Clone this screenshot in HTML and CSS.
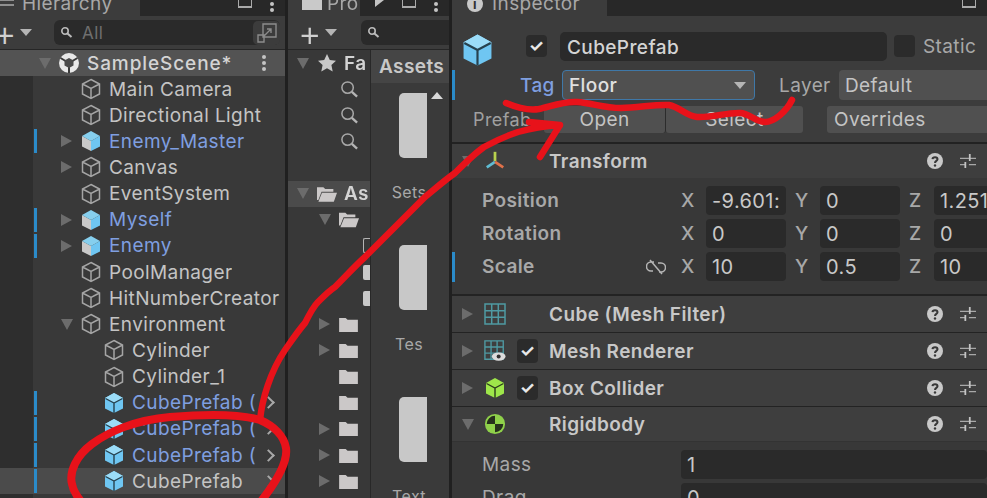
FILE: index.html
```html
<!doctype html>
<html>
<head>
    <meta charset="UTF-8">
    <title>Unity Editor</title>
    <link rel="stylesheet" href="styles.css">
</head>
<body>
    <svg class="defs" width="0" height="0">
        <symbol id="cube" viewBox="0 0 20 22"><path d="M10 1.500 18.500 6v10L10 20.500 1.500 16V6ZM1.500 6 10 10.500 18.500 6M10 10.500v10" fill="none" stroke="#a5a5a5" stroke-width="1.500"/></symbol>
        <symbol id="prefab" viewBox="0 0 20 22"><path d="M10 1 19 6v10.500L10 21 1 16.500V6Z" fill="#6fc6f2"/><path d="M10 1 19 6l-9 4.800L1 6Z" fill="#9bdcf8"/><path d="M1.500 6.500 10 11l8.500-4.500M10 11v10" fill="none" stroke="#27424f" stroke-width="1.400"/></symbol>
        <symbol id="model" viewBox="0 0 20 22"><path d="M10 11 19 6v10.500L10 21Z" fill="#6fc6f2"/><path d="M10 11 1 6v10.500L10 21Z" fill="#c9c9c9"/><path d="M10 1 19 6l-9 5L1 6Z" fill="#86cfee"/></symbol>
        <symbol id="folder" viewBox="0 0 20 16"><path d="M0 1h7l2 2h11v13H0Z" fill="#cbc8c8"/></symbol>
        <symbol id="folder-open" viewBox="0 0 22 17"><path d="M0 1h7l2 2h9v3H5L1.500 15H0Z" fill="#cbc8c8"/><path d="M5.500 7H22l-3.500 10H1.500Z" fill="#cbc8c8"/></symbol>
        <symbol id="lens" viewBox="0 0 20 20"><circle cx="8" cy="8" r="6" fill="none" stroke="#a8a8a8" stroke-width="1.600"/><path d="m12.500 12.500 5.500 5" stroke="#b5b5b5" stroke-width="2.400"/></symbol>
        <symbol id="help" viewBox="0 0 16 16"><circle cx="8" cy="8" r="8" fill="#c9c9c9"/><path d="M5.500 6.200C5.700 3.700 10.500 3.700 10.500 6.300 10.500 8 8 7.900 8 10" fill="none" stroke="#383838" stroke-width="2"/><circle cx="8" cy="12.500" r="1.200" fill="#383838"/></symbol>
        <symbol id="preset" viewBox="0 0 18 18"><path d="M0 6h18M0 13h6M10 13h8" stroke="#a8a8a8" stroke-width="1.500"/><path d="M11 1v8M6 10v7" stroke="#c4c4c4" stroke-width="2"/></symbol>
        <symbol id="grid" viewBox="0 0 22 22"><path d="M1 1h20v20H1ZM7.700 1v20M14.300 1v20M1 7.700h20M1 14.300h20" fill="none" stroke="#4f9aa3" stroke-width="1.500"/></symbol>
    </svg>

    <div class="editor">
        <section class="panel hierarchy">
            <div class="tabbar">
                <div class="tab tab-h">
                    <svg class="tab-icon" viewBox="0 0 14 10" width="14" height="10"><path d="M0 2h14M0 7h14" stroke="#aaa" stroke-width="1.500"/></svg>
                    <span>Hierarchy</span>
                </div>
                <div class="tab-tools">
                    <span class="win-icon"></span>
                    <span class="dots-v small"></span>
                </div>
            </div>
            <div class="toolbar">
                <span class="plus plus-h">+</span><span class="drop"></span>
                <div class="search">
                    <svg viewBox="0 0 14 14" width="14" height="14"><circle cx="5" cy="5" r="3.200" fill="none" stroke="#bbb" stroke-width="1.600"/><path d="m7.500 7.500 4 3.500" stroke="#bbb" stroke-width="2"/></svg>
                    <span>All</span>
                    <div class="search-btn">
                        <svg viewBox="0 0 22 22" width="22" height="22"><path d="M7 2h13v13H7ZM2 13h6v7H2ZM8 14l7-7M11 7h4v4" fill="none" stroke="#8c8c8c" stroke-width="1.400"/></svg>
                    </div>
                </div>
            </div>
            <div class="tree">
                <div class="scene-row">
                    <span class="arrow down"></span>
                    <svg class="ico" viewBox="0 0 20 20"><circle cx="10" cy="10" r="10" fill="#e8e8e8"/><path d="M10 10V20M10 10 1.500 5M10 10l8.500-5" stroke="#3a3a3a" stroke-width="2"/><path d="M10 5l4.500 2.500v5L10 15l-4.500-2.500v-5Z" fill="#4a4a4a"/></svg>
                    <span class="name">SampleScene*</span>
                    <span class="dots-v"></span>
                </div>
                <div class="row lv1"><span class="arrow none"></span><svg class="ico"><use href="#cube"/></svg><span class="name">Main Camera</span></div>
                <div class="row lv1"><span class="arrow none"></span><svg class="ico"><use href="#cube"/></svg><span class="name">Directional Light</span></div>
                <div class="row lv1 over"><span class="arrow right"></span><svg class="ico"><use href="#model"/></svg><span class="name blue">Enemy_Master</span></div>
                <div class="row lv1"><span class="arrow right"></span><svg class="ico"><use href="#cube"/></svg><span class="name">Canvas</span></div>
                <div class="row lv1"><span class="arrow none"></span><svg class="ico"><use href="#cube"/></svg><span class="name">EventSystem</span></div>
                <div class="row lv1 over"><span class="arrow right"></span><svg class="ico"><use href="#model"/></svg><span class="name blue">Myself</span></div>
                <div class="row lv1 over"><span class="arrow right"></span><svg class="ico"><use href="#model"/></svg><span class="name blue">Enemy</span></div>
                <div class="row lv1"><span class="arrow none"></span><svg class="ico"><use href="#cube"/></svg><span class="name">PoolManager</span></div>
                <div class="row lv1"><span class="arrow none"></span><svg class="ico"><use href="#cube"/></svg><span class="name">HitNumberCreator</span></div>
                <div class="row lv1"><span class="arrow down"></span><svg class="ico"><use href="#cube"/></svg><span class="name">Environment</span></div>
                <div class="row lv2"><span class="arrow none"></span><svg class="ico"><use href="#cube"/></svg><span class="name">Cylinder</span></div>
                <div class="row lv2"><span class="arrow none"></span><svg class="ico"><use href="#cube"/></svg><span class="name">Cylinder_1</span></div>
                <div class="row lv2 over"><span class="arrow none"></span><svg class="ico"><use href="#prefab"/></svg><span class="name blue">CubePrefab (</span><span class="chev"></span></div>
                <div class="row lv2 over"><span class="arrow none"></span><svg class="ico"><use href="#prefab"/></svg><span class="name blue">CubePrefab (</span><span class="chev"></span></div>
                <div class="row lv2 over"><span class="arrow none"></span><svg class="ico"><use href="#prefab"/></svg><span class="name blue">CubePrefab (</span><span class="chev"></span></div>
                <div class="row lv2 over picked"><span class="arrow none"></span><svg class="ico"><use href="#prefab"/></svg><span class="name">CubePrefab</span><span class="chev"></span></div>
            </div>
        </section>

        <section class="panel project">
            <div class="tabbar">
                <div class="tab tab-p">
                    <span class="tab-folder"></span>
                    <span>Pro</span>
                </div>
                <div class="tab-tools">
                    <span class="tab-play"></span>
                    <span class="win-icon"></span>
                    <span class="dots-v small"></span>
                </div>
            </div>
            <div class="toolbar">
                <span class="plus plus-p">+</span><span class="drop"></span>
                <div class="search search-p">
                    <svg viewBox="0 0 14 14" width="14" height="14"><circle cx="5" cy="5" r="3.200" fill="none" stroke="#bbb" stroke-width="1.600"/><path d="m7.500 7.500 4 3.500" stroke="#bbb" stroke-width="2"/></svg>
                </div>
            </div>
            <div class="browser">
                <div class="folders">
                    <div class="ftree head"><span class="arrow down"></span><svg class="ico star" viewBox="0 0 20 20"><path d="m10 1 2.800 6 6.200.7-4.600 4.300 1.300 6.500L10 15.200 4.300 18.500 5.600 12 1 7.700 7.200 7Z" fill="#c9c9c9"/></svg><b>Fa</b></div>
                    <div class="ftree sub"><svg class="ico"><use href="#lens"/></svg></div>
                    <div class="ftree sub"><svg class="ico"><use href="#lens"/></svg></div>
                    <div class="ftree sub"><svg class="ico"><use href="#lens"/></svg></div>
                    <div class="ftree empty"></div>
                    <div class="ftree head on"><span class="arrow down"></span><svg class="ico"><use href="#folder-open"/></svg><b>As</b></div>
                    <div class="ftree lv-f"><span class="arrow down"></span><svg class="ico"><use href="#folder-open"/></svg></div>
                    <div class="ftree lv-d"><span class="doc line"></span></div>
                    <div class="ftree lv-d"><span class="doc"></span></div>
                    <div class="ftree lv-d"><span class="doc"></span></div>
                    <div class="ftree lv-f"><span class="arrow right"></span><svg class="ico fold"><use href="#folder"/></svg></div>
                    <div class="ftree lv-f"><span class="arrow right"></span><svg class="ico fold"><use href="#folder"/></svg></div>
                    <div class="ftree lv-f"><span class="arrow none"></span><svg class="ico fold"><use href="#folder"/></svg></div>
                    <div class="ftree lv-f"><span class="arrow none"></span><svg class="ico fold"><use href="#folder"/></svg></div>
                    <div class="ftree lv-f"><span class="arrow right"></span><svg class="ico fold"><use href="#folder"/></svg></div>
                    <div class="ftree lv-f"><span class="arrow right"></span><svg class="ico fold"><use href="#folder"/></svg></div>
                    <div class="ftree lv-f"><span class="arrow right"></span><svg class="ico fold"><use href="#folder"/></svg></div>
                </div>
                <div class="files">
                    <div class="crumb">Assets</div>
                    <div class="file-area">
                        <div class="file-list">
                            <div class="thumb"></div><div class="file-name">Sets</div>
                            <div class="thumb"></div><div class="file-name">Tes</div>
                            <div class="thumb"></div><div class="file-name">Text</div>
                        </div>
                        <span class="scroll-up"></span>
                    </div>
                </div>
            </div>
        </section>

        <section class="panel inspector">
            <div class="tabbar">
                <div class="tab tab-i">
                    <span class="info">i</span>
                    <span>Inspector</span>
                </div>
                <div class="tab-tools">
                    <span class="win-icon"></span>
                </div>
            </div>
            <div class="obj-head">
                <div class="obj-line">
                    <svg class="big-cube"><use href="#prefab"/></svg>
                    <span class="check on">✓</span>
                    <div class="obj-name">CubePrefab</div>
                    <span class="check"></span>
                    <span class="static">Static</span>
                </div>
                <div class="tag-line">
                    <span class="tag-label">Tag</span>
                    <div class="select focus">Floor<span class="drop"></span></div>
                    <span class="layer-label">Layer</span>
                    <div class="select layer">Default</div>
                </div>
                <div class="prefab-line">
                    <span class="prefab-label">Prefab</span>
                    <div class="btn open">Open</div>
                    <div class="btn select-btn">Select</div>
                    <div class="btn overrides">Overrides</div>
                </div>
            </div>

            <div class="comp tall">
                <span class="arrow down"></span>
                <svg class="comp-ico" viewBox="0 0 24 24"><path d="M12 12V2" stroke="#b8d24e" stroke-width="3"/><path d="M12 13 3 19" stroke="#5fbcd3" stroke-width="3"/><path d="m12 13 9 6" stroke="#e0714a" stroke-width="3"/></svg>
                <span class="comp-check none"></span>
                <span class="comp-name">Transform</span>
                <svg class="help"><use href="#help"/></svg><svg class="preset"><use href="#preset"/></svg>
            </div>
            <div class="vectors">
                <div class="vec">
                    <span class="vec-label">Position</span>
                    <span class="axis">X</span><span class="field">-9.601:</span>
                    <span class="axis">Y</span><span class="field">0</span>
                    <span class="axis">Z</span><span class="field">1.251</span>
                </div>
                <div class="vec">
                    <span class="vec-label">Rotation</span>
                    <span class="axis">X</span><span class="field">0</span>
                    <span class="axis">Y</span><span class="field">0</span>
                    <span class="axis">Z</span><span class="field">0</span>
                </div>
                <div class="vec over-i">
                    <span class="vec-label">Scale
                        <svg class="link" viewBox="0 0 20 16"><path d="M8 3H5a4.500 4.500 0 0 0 0 9h2M12 4h3a4.500 4.500 0 0 1 0 9h-2M4 1l12 14" fill="none" stroke="#b5b5b5" stroke-width="1.500"/></svg>
                    </span>
                    <span class="axis">X</span><span class="field">10</span>
                    <span class="axis">Y</span><span class="field">0.5</span>
                    <span class="axis">Z</span><span class="field">10</span>
                </div>
            </div>

            <div class="comp">
                <span class="arrow right"></span>
                <svg class="comp-ico"><use href="#grid"/></svg>
                <span class="comp-check none"></span>
                <span class="comp-name">Cube (Mesh Filter)</span>
                <svg class="help"><use href="#help"/></svg><svg class="preset"><use href="#preset"/></svg>
            </div>
            <div class="comp">
                <span class="arrow right"></span>
                <svg class="comp-ico" viewBox="0 0 24 24"><path d="M1 1h20v20H1ZM7.700 1v20M14.300 1v20M1 7.700h20M1 14.300h20" fill="none" stroke="#4f9aa3" stroke-width="1.500"/><ellipse cx="16" cy="18" rx="7.500" ry="4.500" fill="#ddd"/><circle cx="16" cy="18" r="2.200" fill="#333"/></svg>
                <span class="comp-check on">✓</span>
                <span class="comp-name">Mesh Renderer</span>
                <svg class="help"><use href="#help"/></svg><svg class="preset"><use href="#preset"/></svg>
            </div>
            <div class="comp">
                <span class="arrow right"></span>
                <svg class="comp-ico" viewBox="0 0 20 22"><path d="M10 1 19 6v10.500L10 21 1 16.500V6Z" fill="#9ee64a"/><path d="M1.500 6.500 10 11l8.500-4.500M10 11v10" fill="none" stroke="#2c3a1c" stroke-width="1.400"/></svg>
                <span class="comp-check on">✓</span>
                <span class="comp-name">Box Collider</span>
                <svg class="help"><use href="#help"/></svg><svg class="preset"><use href="#preset"/></svg>
            </div>
            <div class="comp short">
                <span class="arrow down"></span>
                <svg class="comp-ico" viewBox="0 0 24 24"><circle cx="12" cy="12" r="11" fill="#8fd14a"/><path d="M12 12V3a9 9 0 0 0-9 9ZM12 12v9a9 9 0 0 0 9-9Z" fill="#26301c"/></svg>
                <span class="comp-check none"></span>
                <span class="comp-name">Rigidbody</span>
                <svg class="help"><use href="#help"/></svg><svg class="preset"><use href="#preset"/></svg>
            </div>
            <div class="props">
                <div class="prop"><span class="prop-label">Mass</span><span class="field wide">1</span></div>
                <div class="prop"><span class="prop-label">Drag</span><span class="field wide">0</span></div>
            </div>
        </section>
    </div>

    <!-- red marker scribbled over the screenshot -->
    <svg class="scribble" viewBox="0 0 987 498" width="987" height="498">
        <path d="M506 103C518 108 528 111 539 109 552 106 564 101 577 102 592 103 604 108 621 108 638 108 655 104 669 105 680 107 686 116 697 117 712 118 728 112 741 113 750 114 756 122 765 122 774 122 786 112 792 100"/>
        <path class="ring" d="M260 420C240 414 205 414 170 417 135 420 108 432 92 444 76 456 69 472 72 484 73 490 76 495 80 500M260 420C274 426 284 436 286 448 288 462 276 482 262 500"/>
        <path d="M260 420C262 400 270 372 285 350 292 340 298 331 305 323 310 313 314 306 318 302 326 294 330 290 335 287 346 276 355 266 365 257 376 246 385 237 395 227 406 216 415 207 425 197 436 188 445 180 455 173 464 164 474 154 484 147 495 141 506 136 518 132 532 128 546 126 560 125M529 122 560 125 540 157"/>
    </svg>
</body>
</html>
```
FILE: styles.css
```css
html, body {
    margin: 0;
    height: 100%;
    background-color: #202020;
    overflow: hidden;
}
body {
    font-family: Inter, "Liberation Sans", sans-serif;
    font-size: 19px;
    letter-spacing: 0.4px;
    color: #c4c4c4;
}
.defs {
    display: none;
}
.editor {
    display: flex;
    gap: 3px;
    width: 987px;
    height: 498px;
    overflow: hidden;
    filter: blur(0.4px);
}
.panel {
    flex: none;
    height: 498px;
    overflow: hidden;
    background-color: #383838;
}
.hierarchy { width: 285px; }
.project { width: 161px; }
.inspector { width: 535px; }

/* tab strip, its top is cut by the screenshot */
.tabbar {
    display: flex;
    height: 16px;
    background-color: #282828;
    overflow: hidden;
}
.tab {
    flex: none;
    display: flex;
    align-items: flex-end;
    gap: 8px;
    height: 16px;
    box-sizing: border-box;
    background-color: #3c3c3c;
    color: #a8a8a8;
    line-height: 24px;
}
.tab-h { width: 140px; }
.tab-p { width: 72px; gap: 5px; padding-left: 14px; }
.tab-i { width: 155px; gap: 9px; padding-left: 15px; }
.tab-icon { margin-bottom: 8px; }
.tab-folder {
    flex: none;
    width: 20px;
    height: 10px;
    margin-bottom: 6px;
    background-color: #c9c9c9;
}
.tab .info {
    flex: none;
    width: 16px;
    height: 16px;
    margin-bottom: 4px;
    border-radius: 50%;
    background-color: #c9c9c9;
    color: #333;
    font-size: 13px;
    font-weight: 700;
    line-height: 16px;
    text-align: center;
}
.tab-tools {
    flex: 1;
    display: flex;
    justify-content: flex-end;
    align-items: flex-start;
    gap: 18px;
    padding-right: 11px;
}
.tab-play {
    width: 0;
    height: 0;
    border-left: 9px solid #c4c4c4;
    border-bottom: 7px solid transparent;
}
.win-icon {
    width: 12px;
    height: 7px;
    border: 1.500px solid #aaa;
    border-top: 0;
    box-shadow: inset 0 -1px #aaa;
}
.dots-v {
    width: 4px;
    height: 4px;
    border-radius: 50%;
    background-color: #c4c4c4;
    box-shadow: 0 -6px #c4c4c4, 0 6px #c4c4c4;
}
.dots-v.small {
    box-shadow: 0 6px #c4c4c4;
    margin-top: 2px;
}

.toolbar {
    display: flex;
    align-items: center;
    height: 33px;
    border-bottom: 1px solid #262626;
    background-color: #3c3c3c;
}
.plus {
    flex: none;
    width: 20px;
    font-size: 36px;
    font-weight: 300;
    line-height: 30px;
    text-align: center;
    color: #d0d0d0;
}
.plus-h { margin-left: -7px; }
.plus-p { margin-left: 10px; }
.drop {
    flex: none;
    width: 0;
    height: 0;
    margin-left: 7px;
    border-left: 6px solid transparent;
    border-right: 6px solid transparent;
    border-top: 7px solid #b5b5b5;
}
.search {
    flex: none;
    display: flex;
    align-items: center;
    gap: 8px;
    width: 226px;
    height: 25px;
    margin-left: 22px;
    padding-left: 6px;
    box-sizing: border-box;
    border-radius: 6px;
    background-color: #2a2a2a;
    color: #6f6f6f;
    font-size: 17px;
}
.search-btn {
    display: flex;
    align-items: center;
    justify-content: center;
    width: 27px;
    height: 24px;
    margin-left: auto;
    border-radius: 5px;
    background-color: #3c3c3c;
}
.search-p {
    width: 95px;
    margin-left: 24px;
    border-radius: 6px 0 0 6px;
}

/* hierarchy tree */
.tree {
    height: 448px;
    background: linear-gradient(#2e2e2e, #2e2e2e) 0 0 / 33px 100% no-repeat, #393939;
}
.row, .scene-row {
    display: flex;
    align-items: center;
    height: 26.150px;
    white-space: nowrap;
}
.scene-row {
    height: 26px;
    padding: 0 19px 0 39px;
    background-color: #535353;
    font-weight: 500;
    letter-spacing: 0.9px;
    color: #d4d4d4;
}
.scene-row .name { flex: 1; }
.lv1 { padding-left: 61px; }
.lv2 { padding-left: 84px; }
.over {
    background: linear-gradient(#2b8bc9, #2b8bc9) 34px 1px / 3px calc(100% - 2px) no-repeat;
}
.picked {
    background: linear-gradient(#2b8bc9, #2b8bc9) 34px 1px / 3px calc(100% - 2px) no-repeat, #4b4b4b;
}
.arrow {
    flex: none;
    width: 0;
    height: 0;
    margin-right: 8px;
}
.arrow.none { width: 12px; }
.arrow.right {
    border-top: 6px solid transparent;
    border-bottom: 6px solid transparent;
    border-left: 11px solid #6c6c6c;
    margin-right: 9px;
}
.arrow.down {
    border-left: 6px solid transparent;
    border-right: 6px solid transparent;
    border-top: 11px solid #6c6c6c;
}
.ico {
    flex: none;
    width: 20px;
    height: 22px;
    margin-right: 8px;
}
.blue { color: #7f9fe0; }
.chev {
    flex: none;
    width: 7px;
    height: 7px;
    margin: 0 12px 0 auto;
    border-top: 2px solid #a8a8a8;
    border-right: 2px solid #a8a8a8;
    transform: rotate(45deg);
}
.row .name { overflow: hidden; }

/* project window */
.browser {
    display: flex;
    height: 448px;
}
.folders {
    flex: none;
    width: 82px;
    overflow: hidden;
}
.ftree {
    display: flex;
    align-items: center;
    height: 26.150px;
    white-space: nowrap;
}
.ftree b {
    font-weight: 600;
    color: #d4d4d4;
}
.ftree.head { padding-left: 9px; }
.ftree.head .ico { margin-right: 7px; }
.ftree.head.on {
    background-color: #4b4b4b;
}
.ftree.sub { padding-left: 52px; }
.ftree.sub .ico { width: 19px; height: 19px; }
.ftree.empty { height: 26px; }
.lv-f { padding-left: 31px; }
.lv-f .ico { height: 17px; }
.lv-f .fold { width: 19px; height: 15px; }
.lv-d { padding-left: 75px; }
.doc {
    width: 7px;
    height: 15px;
    background-color: #c9c9c9;
    border-radius: 2px 0 0 2px;
}
.doc.line {
    background: none;
    border: 1.500px solid #b5b5b5;
    border-right: 0;
    box-sizing: border-box;
}
.files {
    flex: 1;
    min-width: 0;
    border-left: 1px solid #282828;
    background-color: #3a3a3a;
}
.crumb {
    height: 33px;
    padding-left: 8px;
    background-color: #454545;
    font-weight: 600;
    line-height: 33px;
    color: #c8c8c8;
}
.file-area {
    display: flex;
    height: 415px;
    overflow: hidden;
}
.file-list {
    flex: none;
    width: 56px;
    padding-top: 10px;
    overflow: hidden;
}
.thumb {
    width: 28px;
    height: 65px;
    margin-left: 28px;
    border-radius: 5px 0 0 5px;
    background-color: #c8c8c8;
}
.file-name {
    height: 87px;
    margin-left: 20px;
    padding-top: 24px;
    box-sizing: border-box;
    overflow: hidden;
    font-size: 16px;
    text-align: center;
    color: #a8a8a8;
}
.scroll-up {
    width: 0;
    height: 0;
    margin: 9px 0 0 4px;
    border-left: 6px solid transparent;
    border-right: 6px solid transparent;
    border-bottom: 7px solid #d8d8d8;
}

/* inspector */
.obj-head {
    height: 126px;
    border-bottom: 2px solid #222;
    background: linear-gradient(#2b8bc9, #2b8bc9) 0 54px / 3px 30px no-repeat, #3c3c3c;
}
.obj-line {
    display: flex;
    align-items: center;
    height: 48px;
    padding: 6px 0 0 10px;
}
.big-cube {
    flex: none;
    width: 31px;
    height: 36px;
    margin: 8px 33px 0 0;
}
.check {
    flex: none;
    width: 21px;
    height: 22px;
    border-radius: 4px;
    background-color: #2b2b2b;
    color: #e8e8e8;
    font-size: 17px;
    font-weight: 700;
    line-height: 22px;
    text-align: center;
}
.obj-name {
    flex: none;
    width: 327px;
    height: 29px;
    margin: 0 7px 0 13px;
    padding-left: 7px;
    box-sizing: border-box;
    border-radius: 5px;
    background-color: #2a2a2a;
    font-weight: 500;
    line-height: 31px;
    color: #d4d4d4;
}
.static {
    margin-left: 8px;
    color: #a8a8a8;
}
.tag-line {
    display: flex;
    align-items: center;
    height: 30px;
    padding-left: 68px;
}
.tag-label {
    flex: none;
    width: 42px;
    font-weight: 500;
    color: #7f9fe0;
}
.select {
    flex: none;
    display: flex;
    align-items: center;
    justify-content: space-between;
    height: 30px;
    padding: 0 8px 0 6px;
    box-sizing: border-box;
    background-color: #505050;
    border-radius: 4px;
}
.focus {
    width: 193px;
    border: 1px solid #3f78a8;
    font-weight: 500;
    color: #e0e0e0;
}
.layer-label {
    flex: none;
    margin-left: 24px;
    width: 60px;
    color: #a8a8a8;
}
.layer {
    width: 170px;
}
.prefab-line {
    display: flex;
    align-items: center;
    height: 27px;
    margin-top: 6px;
    padding-left: 21px;
}
.prefab-label {
    flex: none;
    width: 71px;
    font-size: 18px;
    color: #a0a0a0;
}
.btn {
    flex: none;
    height: 27px;
    box-sizing: border-box;
    background-color: #505050;
    border-radius: 3px;
    line-height: 27px;
    text-align: center;
}
.open { width: 122px; border-right: 1px solid #2c2c2c; }
.select-btn { width: 137px; }
.overrides {
    width: 180px;
    margin-left: 24px;
    padding-left: 7px;
    text-align: left;
}

.comp {
    display: flex;
    align-items: center;
    height: 36px;
    padding: 0 11px 0 10px;
    border-bottom: 1px solid #232323;
    background-color: #3e3e3e;
}
.comp.tall { height: 34px; border-bottom: 0; }
.comp.short { height: 34px; border-bottom-color: #333; }
.comp .arrow { margin-right: 10px; }
.comp .arrow.right { margin-right: 11px; }
.comp-ico {
    flex: none;
    width: 22px;
    height: 22px;
}
.comp-check {
    flex: none;
    width: 21px;
    height: 24px;
    margin: 0 11px;
    border-radius: 4px;
    color: #e8e8e8;
    font-size: 17px;
    font-weight: 700;
    line-height: 24px;
    text-align: center;
}
.comp-check.on { background-color: #2b2b2b; }
.comp-name {
    flex: 1;
    font-weight: 600;
    color: #c8c8c8;
}
.help {
    width: 16px;
    height: 16px;
    margin-right: 17px;
}
.preset {
    width: 16px;
    height: 18px;
}

.vectors {
    height: 118px;
    padding-top: 6px;
    box-sizing: border-box;
    border-bottom: 2px solid #232323;
}
.vec {
    display: flex;
    align-items: center;
    height: 33px;
    padding-left: 30px;
    white-space: nowrap;
}
.over-i {
    background: linear-gradient(#2b8bc9, #2b8bc9) 0 2px / 3px 30px no-repeat;
}
.vec-label {
    flex: none;
    display: flex;
    align-items: center;
    justify-content: space-between;
    width: 199px;
    padding-right: 15px;
    box-sizing: border-box;
    font-weight: 600;
    color: #a8a8a8;
}
.link {
    width: 20px;
    height: 16px;
}
.axis {
    flex: none;
    width: 25px;
    font-weight: 500;
    color: #a8a8a8;
}
.field {
    flex: none;
    width: 80px;
    height: 29px;
    margin-right: 9px;
    padding-left: 6px;
    box-sizing: border-box;
    overflow: hidden;
    border-radius: 4px;
    background-color: #2a2a2a;
    font-size: 20px;
    line-height: 31px;
    color: #c8c8c8;
}
.props { padding-top: 6px; }
.prop {
    display: flex;
    align-items: center;
    height: 33px;
    padding-left: 30px;
}
.prop-label {
    flex: none;
    width: 199px;
    color: #a8a8a8;
}
.field.wide {
    width: 306px;
    margin: 0;
}

.scribble {
    position: absolute;
    left: 0;
    top: 0;
    fill: none;
    stroke: #e8121a;
    stroke-width: 6.500;
    stroke-linecap: round;
    stroke-linejoin: round;
    filter: blur(0.4px);
}
.scribble .ring {
    stroke-width: 8;
}
```
